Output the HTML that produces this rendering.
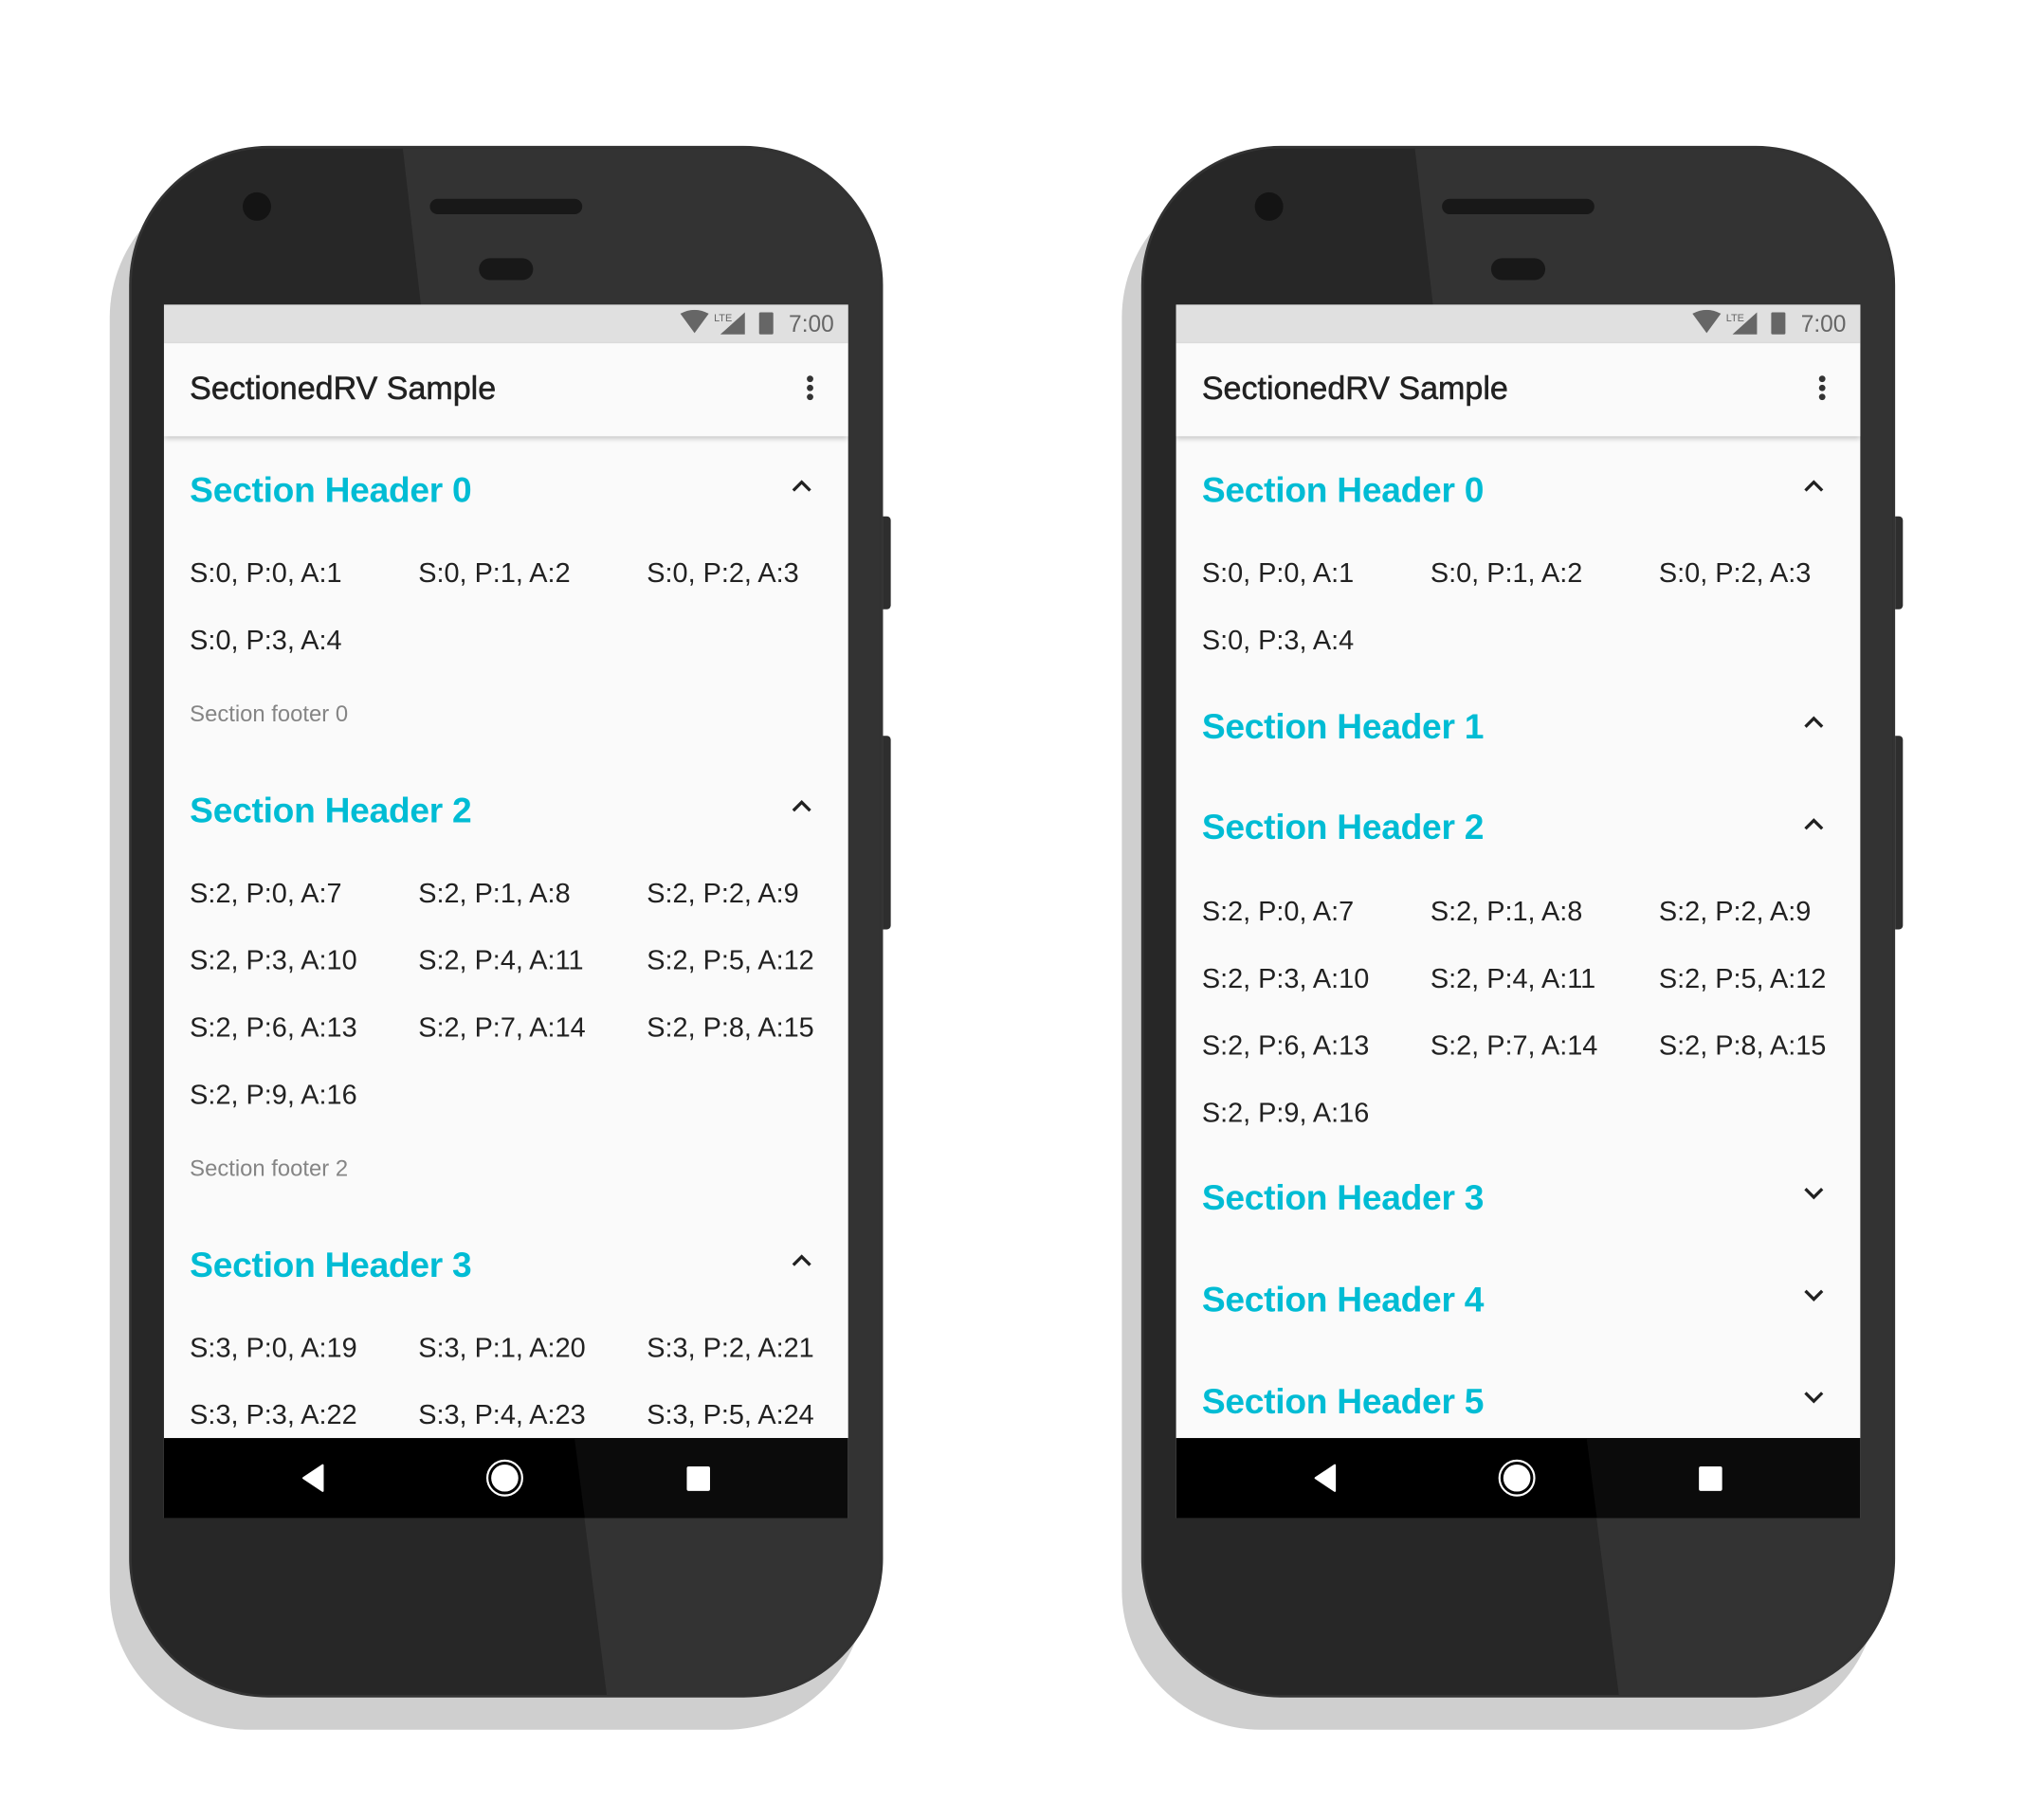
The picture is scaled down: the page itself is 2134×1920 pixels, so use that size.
<!DOCTYPE html>
<html><head><meta charset="utf-8"><style>
*{margin:0;padding:0;box-sizing:border-box}
html,body{width:2134px;height:1920px;overflow:hidden;background:#fff}
#w{position:absolute;left:0;top:0;width:1570px;height:1410px;transform:scale(1.3618);transform-origin:0 0;font-family:"Liberation Sans",sans-serif}
.a{position:absolute}
.t{position:absolute;line-height:1;white-space:nowrap}
.h{font-size:27.3px;font-weight:bold;color:#00bcd4;letter-spacing:-0.2px}
.i{font-size:21.2px;color:#212121}
.f{font-size:17.5px;color:#858585}
</style></head><body><div id="w">

<!-- LEFT PHONE -->
<div class="a" style="left:0;top:0">
<div class="a" style="left:85px;top:138px;width:585px;height:1202px;border-radius:108px;background:#cfcfcf"></div>
<div class="a" style="left:684px;top:400px;width:6px;height:72px;background:#2e2e2e;border-radius:0 3px 3px 0"></div>
<div class="a" style="left:684px;top:570px;width:6px;height:150px;background:#2e2e2e;border-radius:0 3px 3px 0"></div>
<div class="a" style="left:100px;top:113px;width:584px;height:1202px;border-radius:108px;background:#333;overflow:hidden">
 <div class="a" style="left:2px;top:2px;right:2px;bottom:2px;border-radius:106px;background:#272727;overflow:hidden">
  <svg class="a" style="left:0;top:0" width="580" height="1198"><polygon points="210,0 580,0 580,1198 368,1198 343,1000 224,121" fill="#333"/></svg>
 </div>
</div>
<div class="a" style="left:188px;top:149px;width:22px;height:22px;border-radius:50%;background:#141414"></div>
<div class="a" style="left:333px;top:154px;width:118px;height:12px;border-radius:6px;background:#181818"></div>
<div class="a" style="left:371px;top:200px;width:42px;height:17px;border-radius:9px;background:#181818"></div>
<div class="a" style="left:127px;top:236px;width:530px;height:940px;background:#fafafa;overflow:hidden">
 <div class="a" style="left:0;top:0;width:530px;height:30px;background:#e0e0e0"></div>
 <svg class="a" style="left:398px;top:4px" width="130" height="24">
  <path d="M2 3 Q13 -3 24 3 L13 18 Z" fill="#666"/>
  <text x="28" y="9" font-size="8" fill="#666" font-family="Liberation Sans">LTE</text>
  <polygon points="33,19 52,19 52,2" fill="#666"/>
  <rect x="63" y="2" width="11" height="17" rx="1" fill="#666"/>
 </svg>
 <div class="t" style="left:484px;top:6px;font-size:18px;color:#666">7:00</div>
 <div class="a" style="left:0;top:30px;width:530px;height:72px;background:#fafafa;box-shadow:0 2px 4px rgba(0,0,0,.22);z-index:2">
  <div class="t" style="left:20px;top:23px;font-size:25px;color:#212121;-webkit-text-stroke:0.4px #212121">SectionedRV Sample</div>
  <div class="a" style="left:498px;top:25px;width:5px;height:5px;border-radius:50%;background:#333;box-shadow:0 7px 0 #333,0 14px 0 #333"></div>
 </div>
 <div class="a" style="left:0;top:102px;width:530px;height:776px;overflow:hidden">
  <div class="t h" style="left:20px;top:28px">Section Header 0</div>
  <svg class="a" style="left:486px;top:33px" width="16" height="10"><polyline points="1.5,9 8,2.5 14.5,9" fill="none" stroke="#212121" stroke-width="2.4"/></svg>
  <div class="t i" style="left:20px;top:96px">S:0, P:0, A:1</div><div class="t i" style="left:197px;top:96px">S:0, P:1, A:2</div><div class="t i" style="left:374px;top:96px">S:0, P:2, A:3</div>
  <div class="t i" style="left:20px;top:148px">S:0, P:3, A:4</div>
  <div class="t f" style="left:20px;top:207px">Section footer 0</div>
  <div class="t h" style="left:20px;top:276px">Section Header 2</div>
  <svg class="a" style="left:486px;top:281px" width="16" height="10"><polyline points="1.5,9 8,2.5 14.5,9" fill="none" stroke="#212121" stroke-width="2.4"/></svg>
  <div class="t i" style="left:20px;top:344px">S:2, P:0, A:7</div><div class="t i" style="left:197px;top:344px">S:2, P:1, A:8</div><div class="t i" style="left:374px;top:344px">S:2, P:2, A:9</div>
  <div class="t i" style="left:20px;top:396px">S:2, P:3, A:10</div><div class="t i" style="left:197px;top:396px">S:2, P:4, A:11</div><div class="t i" style="left:374px;top:396px">S:2, P:5, A:12</div>
  <div class="t i" style="left:20px;top:448px">S:2, P:6, A:13</div><div class="t i" style="left:197px;top:448px">S:2, P:7, A:14</div><div class="t i" style="left:374px;top:448px">S:2, P:8, A:15</div>
  <div class="t i" style="left:20px;top:500px">S:2, P:9, A:16</div>
  <div class="t f" style="left:20px;top:559px">Section footer 2</div>
  <div class="t h" style="left:20px;top:628px">Section Header 3</div>
  <svg class="a" style="left:486px;top:633px" width="16" height="10"><polyline points="1.5,9 8,2.5 14.5,9" fill="none" stroke="#212121" stroke-width="2.4"/></svg>
  <div class="t i" style="left:20px;top:696px">S:3, P:0, A:19</div><div class="t i" style="left:197px;top:696px">S:3, P:1, A:20</div><div class="t i" style="left:374px;top:696px">S:3, P:2, A:21</div>
  <div class="t i" style="left:20px;top:748px">S:3, P:3, A:22</div><div class="t i" style="left:197px;top:748px">S:3, P:4, A:23</div><div class="t i" style="left:374px;top:748px">S:3, P:5, A:24</div>
 </div>
 <div class="a" style="left:0;top:878px;width:530px;height:62px;background:#000">
  <svg class="a" style="left:0;top:0" width="530" height="62"><polygon points="318,0 530,0 530,62 326,62" fill="#0b0b0b"/>
   <polygon points="123,21 123,41 108,31" fill="#fff" stroke="#fff" stroke-width="1.5" stroke-linejoin="round"/>
   <circle cx="264" cy="31" r="13.5" fill="none" stroke="#fff" stroke-width="1.6"/><circle cx="264" cy="31" r="10.5" fill="#fff"/>
   <rect x="405" y="22" width="18" height="19" rx="1.5" fill="#fff"/>
  </svg>
 </div>
</div>
</div>

<!-- RIGHT PHONE -->
<div class="a" style="left:784px;top:0">
<div class="a" style="left:85px;top:138px;width:585px;height:1202px;border-radius:108px;background:#cfcfcf"></div>
<div class="a" style="left:684px;top:400px;width:6px;height:72px;background:#2e2e2e;border-radius:0 3px 3px 0"></div>
<div class="a" style="left:684px;top:570px;width:6px;height:150px;background:#2e2e2e;border-radius:0 3px 3px 0"></div>
<div class="a" style="left:100px;top:113px;width:584px;height:1202px;border-radius:108px;background:#333;overflow:hidden">
 <div class="a" style="left:2px;top:2px;right:2px;bottom:2px;border-radius:106px;background:#272727;overflow:hidden">
  <svg class="a" style="left:0;top:0" width="580" height="1198"><polygon points="210,0 580,0 580,1198 368,1198 343,1000 224,121" fill="#333"/></svg>
 </div>
</div>
<div class="a" style="left:188px;top:149px;width:22px;height:22px;border-radius:50%;background:#141414"></div>
<div class="a" style="left:333px;top:154px;width:118px;height:12px;border-radius:6px;background:#181818"></div>
<div class="a" style="left:371px;top:200px;width:42px;height:17px;border-radius:9px;background:#181818"></div>
<div class="a" style="left:127px;top:236px;width:530px;height:940px;background:#fafafa;overflow:hidden">
 <div class="a" style="left:0;top:0;width:530px;height:30px;background:#e0e0e0"></div>
 <svg class="a" style="left:398px;top:4px" width="130" height="24">
  <path d="M2 3 Q13 -3 24 3 L13 18 Z" fill="#666"/>
  <text x="28" y="9" font-size="8" fill="#666" font-family="Liberation Sans">LTE</text>
  <polygon points="33,19 52,19 52,2" fill="#666"/>
  <rect x="63" y="2" width="11" height="17" rx="1" fill="#666"/>
 </svg>
 <div class="t" style="left:484px;top:6px;font-size:18px;color:#666">7:00</div>
 <div class="a" style="left:0;top:30px;width:530px;height:72px;background:#fafafa;box-shadow:0 2px 4px rgba(0,0,0,.22);z-index:2">
  <div class="t" style="left:20px;top:23px;font-size:25px;color:#212121;-webkit-text-stroke:0.4px #212121">SectionedRV Sample</div>
  <div class="a" style="left:498px;top:25px;width:5px;height:5px;border-radius:50%;background:#333;box-shadow:0 7px 0 #333,0 14px 0 #333"></div>
 </div>
 <div class="a" style="left:0;top:102px;width:530px;height:776px;overflow:hidden">
  <div class="t h" style="left:20px;top:28px">Section Header 0</div>
  <svg class="a" style="left:486px;top:33px" width="16" height="10"><polyline points="1.5,9 8,2.5 14.5,9" fill="none" stroke="#212121" stroke-width="2.4"/></svg>
  <div class="t i" style="left:20px;top:96px">S:0, P:0, A:1</div><div class="t i" style="left:197px;top:96px">S:0, P:1, A:2</div><div class="t i" style="left:374px;top:96px">S:0, P:2, A:3</div>
  <div class="t i" style="left:20px;top:148px">S:0, P:3, A:4</div>
  <div class="t h" style="left:20px;top:211px">Section Header 1</div>
  <svg class="a" style="left:486px;top:216px" width="16" height="10"><polyline points="1.5,9 8,2.5 14.5,9" fill="none" stroke="#212121" stroke-width="2.4"/></svg>
  <div class="t h" style="left:20px;top:289px">Section Header 2</div>
  <svg class="a" style="left:486px;top:295px" width="16" height="10"><polyline points="1.5,9 8,2.5 14.5,9" fill="none" stroke="#212121" stroke-width="2.4"/></svg>
  <div class="t i" style="left:20px;top:358px">S:2, P:0, A:7</div><div class="t i" style="left:197px;top:358px">S:2, P:1, A:8</div><div class="t i" style="left:374px;top:358px">S:2, P:2, A:9</div>
  <div class="t i" style="left:20px;top:410px">S:2, P:3, A:10</div><div class="t i" style="left:197px;top:410px">S:2, P:4, A:11</div><div class="t i" style="left:374px;top:410px">S:2, P:5, A:12</div>
  <div class="t i" style="left:20px;top:462px">S:2, P:6, A:13</div><div class="t i" style="left:197px;top:462px">S:2, P:7, A:14</div><div class="t i" style="left:374px;top:462px">S:2, P:8, A:15</div>
  <div class="t i" style="left:20px;top:514px">S:2, P:9, A:16</div>
  <div class="t h" style="left:20px;top:576px">Section Header 3</div>
  <svg class="a" style="left:486px;top:582px" width="16" height="10"><polyline points="1.5,1 8,7.5 14.5,1" fill="none" stroke="#212121" stroke-width="2.4"/></svg>
  <div class="t h" style="left:20px;top:655px">Section Header 4</div>
  <svg class="a" style="left:486px;top:661px" width="16" height="10"><polyline points="1.5,1 8,7.5 14.5,1" fill="none" stroke="#212121" stroke-width="2.4"/></svg>
  <div class="t h" style="left:20px;top:734px">Section Header 5</div>
  <svg class="a" style="left:486px;top:740px" width="16" height="10"><polyline points="1.5,1 8,7.5 14.5,1" fill="none" stroke="#212121" stroke-width="2.4"/></svg>
 </div>
 <div class="a" style="left:0;top:878px;width:530px;height:62px;background:#000">
  <svg class="a" style="left:0;top:0" width="530" height="62"><polygon points="318,0 530,0 530,62 326,62" fill="#0b0b0b"/>
   <polygon points="123,21 123,41 108,31" fill="#fff" stroke="#fff" stroke-width="1.5" stroke-linejoin="round"/>
   <circle cx="264" cy="31" r="13.5" fill="none" stroke="#fff" stroke-width="1.6"/><circle cx="264" cy="31" r="10.5" fill="#fff"/>
   <rect x="405" y="22" width="18" height="19" rx="1.5" fill="#fff"/>
  </svg>
 </div>
</div>
</div>

</div></body></html>
